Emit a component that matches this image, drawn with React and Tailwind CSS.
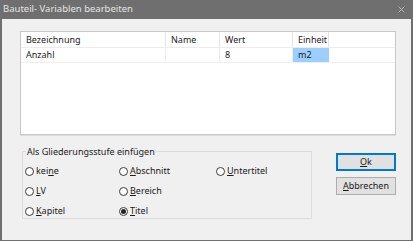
import { X } from "lucide-react";

const font = { fontFamily: '"Noto Sans", "Open Sans", sans-serif' };

function U({ children }) {
  return <span className="underline underline-offset-1">{children}</span>;
}

function Radio({ checked, children }) {
  return (
    <div className="flex items-center gap-[2px] h-[20px]">
      <span className="w-[9px] h-[9px] rounded-full border border-[#3a3a3a] bg-white flex items-center justify-center">
        {checked && <span className="w-[5px] h-[5px] rounded-full bg-[#222]" />}
      </span>
      <span className="text-[9px] text-[#1a1a1a]">{children}</span>
    </div>
  );
}

export default function App() {
  const cols = [
    { label: "Bezeichnung", w: "w-[145px]" },
    { label: "Name", w: "w-[54px]" },
    { label: "Wert", w: "w-[73px]" },
    { label: "Einheit", w: "w-[36px]" },
  ];
  const row = ["Anzahl", "", "8", "m2"];

  return (
    <div style={font} className="w-[413px] h-[242px] bg-white">
      <div className="w-[413px] h-[241px] flex flex-col bg-[#f0f0f0] border-x-2 border-b border-[#6f6f6f]">
        <div className="h-[19px] shrink-0 bg-[#6f6f6f] flex items-center justify-between pl-[3px] pr-[6px] -mx-[2px]">
          <span className="text-[9.5px] text-[#e6e6e6]">Bauteil- Variablen bearbeiten</span>
          <X className="w-[11px] h-[11px] text-[#d0d0d0]" strokeWidth={1.5} />
        </div>

        <div className="ml-[18px] mt-[12px] w-[376px] h-[104px] bg-white border border-[#c8c8c8] shadow-[0_1px_0_#dcdcdc]">
          <div className="flex h-[16px] border-b border-[#ececec]">
            {cols.map((c) => (
              <div key={c.label} className={`${c.w} h-full border-r border-[#e4e4e4] pl-[5px] flex items-center text-[9px] text-[#1a1a1a]`}>
                {c.label}
              </div>
            ))}
          </div>
          <div className="flex h-[15px] border-b border-[#f0f0f0]">
            {row.map((v, i) => (
              <div
                key={i}
                className={`${cols[i].w} h-full pl-[5px] flex items-center text-[9px] text-[#1a1a1a] ${i === 3 ? "bg-[#9ccfff]" : "border-r border-[#ececec]"}`}
              >
                {v}
              </div>
            ))}
          </div>
        </div>

        <div className="flex mt-[16px]">
          <fieldset className="ml-[20px] w-[290px] h-[73px] border border-[#dcdcdc] px-[2px] pb-[2px] -mt-[5px]">
            <legend className="text-[9px] text-[#1a1a1a] ml-[1px] px-[1px] leading-[11px]">Als Gliederungsstufe einfügen</legend>
            <div className="grid grid-cols-[94px_97px_1fr] mt-[4px]">
              <Radio>kei<U>n</U>e</Radio>
              <Radio><U>A</U>bschnitt</Radio>
              <Radio><U>U</U>ntertitel</Radio>
              <Radio><U>L</U>V</Radio>
              <Radio><U>B</U>ereich</Radio>
              <div />
              <Radio><U>K</U>apitel</Radio>
              <Radio checked><U>T</U>itel</Radio>
            </div>
          </fieldset>

          <div className="ml-[24px] flex flex-col gap-[6px] pt-[2px]">
            <button className="w-[60px] h-[18px] bg-[#e1e1e1] border border-[#0078d7] shadow-[inset_0_0_0_1px_#0078d7] text-[9px] text-[#1a1a1a] flex items-center justify-center">
              <U>O</U>k
            </button>
            <button className="w-[60px] h-[18px] bg-[#e1e1e1] border border-[#adadad] text-[9px] text-[#1a1a1a] flex items-center justify-center">
              <span><U>A</U>bbrechen</span>
            </button>
          </div>
        </div>
      </div>
    </div>
  );
}
